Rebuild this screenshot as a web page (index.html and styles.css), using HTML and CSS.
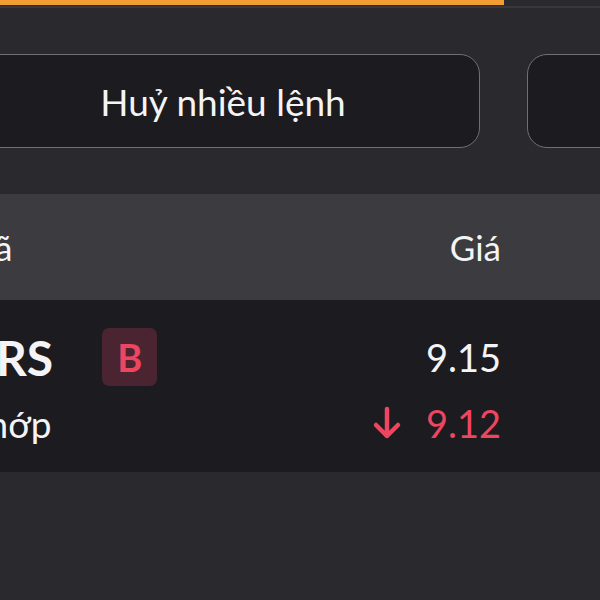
FILE: index.html
```html
<!DOCTYPE html>
<html lang="vi">
<head>
    <meta charset="UTF-8">
    <title>Sổ lệnh</title>
    <link rel="stylesheet" href="styles.css">
</head>
<body>
    <div class="progress">
        <div class="progress-fill" style="width: 84%"></div>
    </div>

    <div class="actions">
        <button class="btn btn-wide">Huỷ nhiều lệnh</button>
        <button class="btn btn-small"></button>
    </div>

    <div class="orders">
        <div class="orders-head">
            <div class="col-code">Mã</div>
            <div class="col-price">Giá</div>
        </div>
        <div class="order-row">
            <div class="col-code">
                <div class="line">
                    <span class="ticker">HRS</span>
                    <span class="side side-buy">B</span>
                </div>
                <div class="line status">Khớp</div>
            </div>
            <div class="col-price">
                <div class="line">9.15</div>
                <div class="line price-down">
                    <svg class="arrow" width="30" height="34" viewBox="0 0 30 34">
                        <path d="M15 3 V30 M4 19 L15 30 L26 19" fill="none" stroke="currentColor" stroke-width="4.5" stroke-linecap="round" stroke-linejoin="round"/>
                    </svg>
                    <span>9.12</span>
                </div>
            </div>
        </div>
    </div>
</body>
</html>
```

FILE: styles.css
```css
body {
    margin: 0;
    width: 600px;
    height: 600px;
    overflow: hidden;
    background-color: #2a292e;
    font-family: Lato, "Noto Sans", sans-serif;
    color: #f4f4f6;
}

.progress {
    height: 6px;
    border-bottom: 2px solid #38373c;
}

.progress-fill {
    height: 5px;
    background-color: #f19d33;
}

.actions {
    display: flex;
    gap: 47px;
    margin: 46px 0 46px -100px;
}

.btn {
    height: 94px;
    flex-shrink: 0;
    background-color: #1c1b1f;
    border: 1px solid #716f75;
    border-radius: 20px;
    color: #f4f4f6;
    font-family: inherit;
    font-size: 37px;
    padding: 0;
}

.btn-wide {
    width: 580px;
    padding-left: 66px;
}

.btn-small {
    width: 200px;
}

.orders {
    margin-left: -37px;
}

.orders-head,
.order-row {
    display: flex;
    justify-content: space-between;
    padding-right: 99px;
}

.orders-head {
    height: 106px;
    align-items: center;
    background-color: #3c3b40;
    font-size: 35px;
}

.order-row {
    height: 172px;
    box-sizing: border-box;
    padding-top: 28px;
    background-color: #1c1b1f;
}

.col-price {
    text-align: right;
}

.line {
    display: flex;
    align-items: center;
    height: 58px;
}

.col-price .line {
    justify-content: flex-end;
    font-size: 38px;
}

.ticker {
    font-size: 48px;
    font-weight: 700;
    margin: 0 49px 0 -4px;
}

.side {
    width: 55px;
    height: 58px;
    border-radius: 7px;
    display: flex;
    align-items: center;
    justify-content: center;
    font-size: 38px;
    font-weight: 700;
}

.side-buy {
    background-color: #4a2430;
    color: #ee4560;
}

.status {
    font-size: 37px;
    margin-top: 8px;
}

.col-price .price-down {
    margin-top: 8px;
    color: #ee4560;
}

.arrow {
    margin-right: 24px;
}
```
